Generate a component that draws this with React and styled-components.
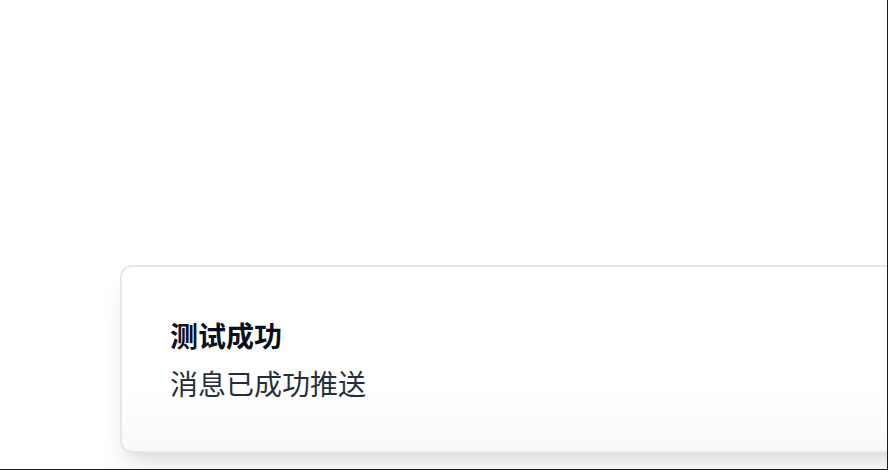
import React from "react";
import styled, { createGlobalStyle } from "styled-components";

const Global = createGlobalStyle`
  html, body {
    margin: 0;
    padding: 0;
    background: #ffffff;
  }
  body {
    font-family: "Inter", "Noto Sans CJK SC", sans-serif;
    -webkit-font-smoothing: antialiased;
  }
`;

const Frame = styled.div`
  box-sizing: border-box;
  width: 888px;
  height: 470px;
  border-right: 1px solid #1c1c1e;
  border-bottom: 1px solid #1c1c1e;
  overflow: hidden;
  display: flex;
  flex-direction: column;
  justify-content: flex-end;
  padding: 0 0 16px 120px;
  background: #ffffff;
`;

const Toast = styled.div`
  box-sizing: border-box;
  width: 820px;
  padding: 48px;
  border: 2px solid #e2e8f0;
  border-radius: 12px;
  background: linear-gradient(to bottom, #ffffff 0%, #ffffff 65%, #f9f9fa 100%);
  box-shadow: 0 20px 30px -6px rgba(0, 0, 0, 0.1), 0 8px 12px -8px rgba(0, 0, 0, 0.1);
  display: grid;
  gap: 8px;
`;

const Title = styled.div`
  font-family: "Noto Sans CJK SC", sans-serif;
  font-size: 28px;
  line-height: 40px;
  font-weight: 700;
  color: #0b1020;
`;

const Description = styled.div`
  font-family: "Noto Sans CJK SC", sans-serif;
  font-size: 28px;
  line-height: 40px;
  font-weight: 400;
  color: #0f172a;
  opacity: 0.9;
`;

export default function App() {
  return (
    <>
      <Global />
      <Frame>
        <Toast role="status">
          <Title>测试成功</Title>
          <Description>消息已成功推送</Description>
        </Toast>
      </Frame>
    </>
  );
}
